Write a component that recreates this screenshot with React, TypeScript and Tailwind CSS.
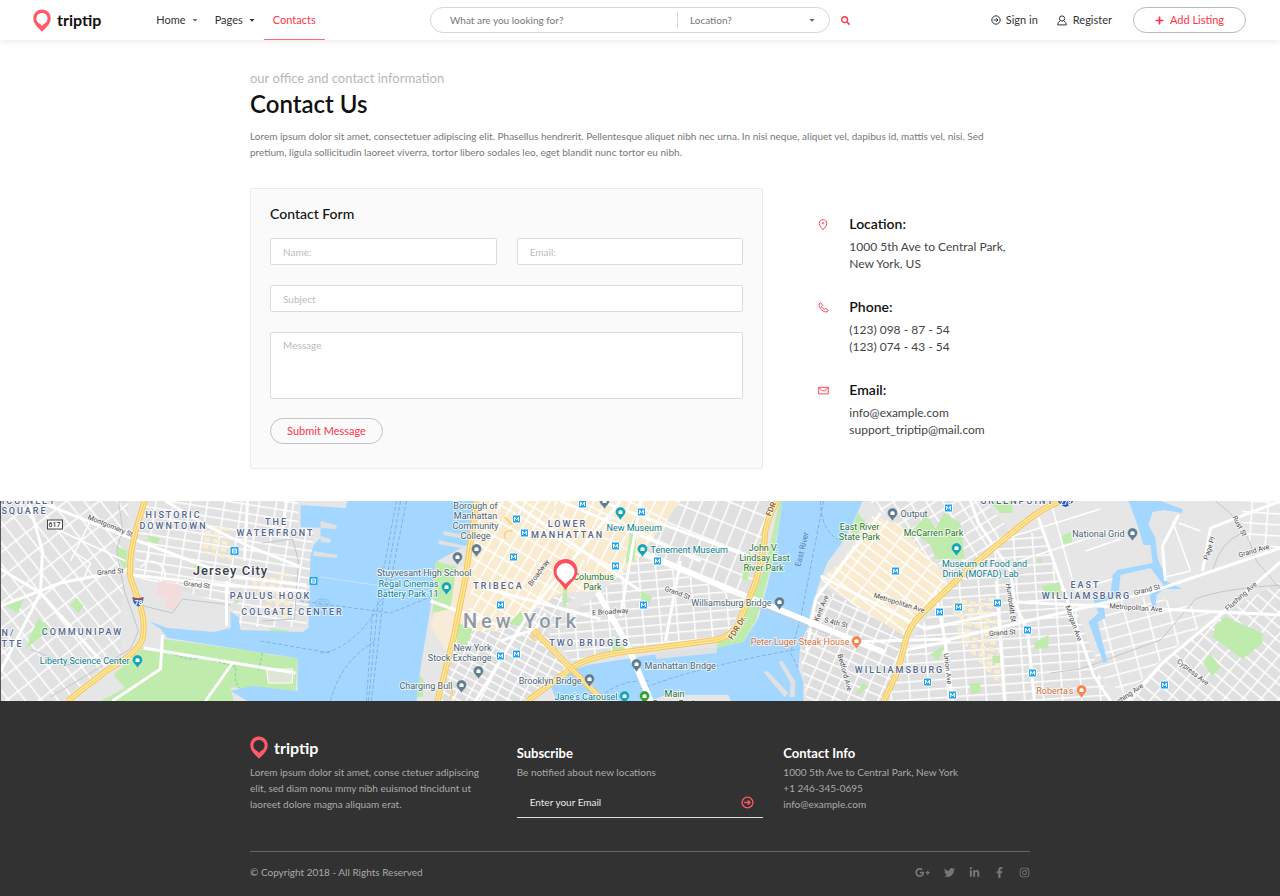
import React from 'react'

import { FaCaretDown, FaFacebookF, FaGooglePlusG, FaInstagram, FaLinkedinIn, FaPlus, FaSearch, FaTwitter } from "react-icons/fa";

function Logo({ textClass }: { textClass: string }) {
  return (
    <a href="#" className={`flex items-center gap-[6px] ${textClass}`}>
      <svg width="18" height="23" viewBox="0 0 18 23" aria-hidden="true">
        <path
          fill="#ff5a67"
          fillRule="evenodd"
          d="M9 0.5C4 0.5 0.3 4.2 0.3 9.2c0 3.3 1.7 6.2 4 8.7L9 22.8l4.700-4.900c2.300-2.500 4-5.400 4-8.700C17.700 4.200 14 0.500 9 0.500zM9 4c3.200 0 5.600 2.400 5.600 5.500 0 2.700-1.700 4.600-4 5.600L9 16.900l-1.600-1.800c-2.300-1-4-2.900-4-5.600C3.400 6.400 5.800 4 9 4z"
        />
      </svg>
      <span className="text-[16px] leading-5 font-bold">triptip</span>
    </a>
  );
}

function ArrowCircle({ size }: { size: number }) {
  return (
    <svg width={size} height={size} viewBox="0 0 12 12" fill="none" stroke="currentColor" strokeWidth="1.2" aria-hidden="true">
      <circle cx="6" cy="6" r="5" />
      <path d="M3 6h5M6.200 3.800L8.400 6 6.200 8.200" />
    </svg>
  );
}

function Header() {
  return (
    <header className="relative grid grid-cols-[1fr_420px_1fr] h-10 bg-white text-[11px] text-[#333] shadow-[0_2px_6px_rgba(0,0,0,0.08)]">
      <div className="flex items-center pl-[33px]">
        <Logo textClass="text-[#111]" />
        <nav className="flex h-10 ml-[47px]">
          <a href="#" className="flex items-center gap-[5px] px-2">
            Home <FaCaretDown size={8} className="text-[#777]" />
          </a>
          <a href="#" className="flex items-center gap-[5px] px-2">
            Pages <FaCaretDown size={8} />
          </a>
          <a href="#" className="flex items-center px-[9px] text-[#ff3347] border-y border-t-transparent border-b-[#ff6b76]">Contacts</a>
        </nav>
      </div>

      {/* Search */}
      <form className="flex items-center gap-[11px] text-[10px]">
        <div className="flex flex-1 items-center h-[26px] border border-[#d8d8d8] rounded-full px-[19px]">
          <input aria-label="Search" placeholder="What are you looking for?" className="flex-1 min-w-0 outline-none placeholder:text-[#777]" />
          <div className="relative flex items-center w-[133px] h-4 border-l border-[#d8d8d8]">
            <select aria-label="Location" className="appearance-none w-full pl-3 text-[#777] outline-none">
              <option>Location?</option>
            </select>
            <FaCaretDown size={8} className="absolute -right-[6px] text-[#666] pointer-events-none" />
          </div>
        </div>
        <button type="button" aria-label="Find" className="text-[#ff3347]">
          <FaSearch size={9} />
        </button>
      </form>

      <div className="flex items-center justify-end pr-[34px]">
        <a href="#" className="flex items-center gap-[5px]">
          <ArrowCircle size={10} /> Sign in
        </a>
        <a href="#" className="flex items-center gap-[6px] ml-[19px]">
          <svg width="10" height="11" viewBox="0 0 10 11" fill="none" stroke="currentColor" strokeWidth="1" aria-hidden="true">
            <circle cx="5" cy="3.500" r="2.600" />
            <path d="M3.200 5.800L1.200 7.600l-0.500 2.300h8.600l-0.500-2.300-2-1.800" />
          </svg>
          Register
        </a>
        <button type="button" className="flex items-center justify-center gap-[6px] w-[113px] h-[26px] ml-[21px] border border-[#bbb] rounded-full text-[#ff3347]">
          <FaPlus size={9} /> Add Listing
        </button>
      </div>
    </header>
  );
}

function ContactForm() {
  const field = "w-full border border-[#dcdcdc] rounded-[2px] bg-white px-3 text-[10px] outline-none placeholder:text-[#bbb]";
  return (
    <form className="col-span-2 border border-[#ebebeb] rounded-[2px] bg-[#fafafa] px-[19px] pt-[15px] pb-6 text-[11px]">
      <h2 className="text-[14px] leading-5 font-medium text-[#111]">Contact Form</h2>
      <div className="grid grid-cols-2 gap-5 mt-[14px]">
        <input aria-label="Name" placeholder="Name:" className={`${field} h-[27px]`} />
        <input aria-label="Email" type="email" placeholder="Email:" className={`${field} h-[27px]`} />
        <input aria-label="Subject" placeholder="Subject" className={`${field} h-[27px] col-span-2`} />
        <textarea aria-label="Message" placeholder="Message" className={`${field} block h-[67px] py-1 leading-4 resize-none col-span-2`} />
      </div>
      <button type="button" className="block w-[113px] h-[26px] mt-[19px] border border-[#c4c4c4] rounded-full text-[#ff3347]">Submit Message</button>
    </form>
  );
}

const contacts = [
  {
    title: "Location:",
    lines: ["1000 5th Ave to Central Park,", "New York, US"],
    icon: (
      <>
        <path d="M5 0.700C2.700 0.700 1.200 2.300 1.200 4.400c0 2.300 2.200 4.200 3.800 6.400 1.600-2.200 3.800-4.100 3.800-6.400C8.800 2.300 7.300 0.700 5 0.700z" />
        <circle cx="5" cy="4.300" r="0.700" />
      </>
    ),
  },
  {
    title: "Phone:",
    lines: ["(123) 098 - 87 - 54", "(123) 074 - 43 - 54"],
    icon: <path d="M1.300 1.600l1.300-0.900 2 2.600-1.100 1.200c0.600 1.200 1.500 2.200 2.800 2.900l1.300-1.100 2.700 2-0.900 1.500C5.500 11 0 5.500 1.300 1.600z" />,
  },
  {
    title: "Email:",
    lines: ["info@example.com", "support_triptip@mail.com"],
    icon: <path d="M0.700 2.300h9.600v6.600H0.700zM0.700 2.500l3.500 3.300h2.600l3.500-3.300" />,
  },
];

function ContactDetails() {
  return (
    <div className="flex flex-col gap-[25px] pl-[35px] pt-[26px]">
      {contacts.map((c) => (
        <div key={c.title} className="flex items-start gap-5">
          <svg width="11" height="11" viewBox="0 0 11 11" className="mt-[5px] shrink-0" fill="none" stroke="#ff4656" strokeWidth="1" aria-hidden="true">
            {c.icon}
          </svg>
          <div>
            <h3 className="text-[14px] leading-5 font-semibold text-[#111]">{c.title}</h3>
            <p className="mt-1 text-[12px] leading-[17px] text-[#444]">
              {c.lines[0]}<br />{c.lines[1]}
            </p>
          </div>
        </div>
      ))}
    </div>
  );
}

// [id, column step, row step, angle, block colour, outline]
const blocks: [string, number, number, number, string, string][] = [
  ["heights", 13, 20, -38, "#e2e2e2", "0,0 128,0 128,40 118,130 122,150 62,200 0,200"],
  ["downtown", 17, 9, 9, "#e2e2e2", "146,0 298,0 298,26 313,30 306,126 240,126 232,108 215,100 134,76 136,36"],
  ["battery", 12, 8, 28, "#dedede", "466,75 480,90 575,96 545,128 568,166 520,200 440,200"],
  ["tribeca", 10, 15, 31, "#f9ebd0", "476,0 560,0 600,90 560,92 500,130 458,130"],
  ["soho", 11, 22, 27, "#f9ebd0", "550,0 690,0 700,70 640,100 590,70"],
  ["eastside", 13, 21, 22, "#e0e0e0", "680,0 776,0 762,50 748,98 722,90 700,72 640,55"],
  ["bridges", 17, 9, -5, "#e0e0e0", "600,92 640,55 747,100 724,136 640,148 575,164 545,128"],
  ["northside", 20, 9, 37, "#f9ebd0", "840,62 872,15 905,25 935,62 948,82 922,112 900,140 820,78"],
  ["southside", 14, 10, 24, "#dedede", "820,84 906,136 895,172 882,200 806,200 800,150"],
  ["greenpoint", 14, 11, -32, "#e2e2e2", "868,0 985,0 1010,30 960,72 930,60 900,25"],
  ["eastwb", 19, 9, -4, "#e0e0e0", "1010,36 1040,30 1080,120 1110,200 886,200 910,140 950,84"],
  ["bushwick", 14, 11, 40, "#e0e0e0", "1225,112 1280,80 1280,200 1130,200 1163,161"],
  ["morgan", 22, 12, -15, "#e4e4e4", "1095,105 1150,95 1215,112 1160,160 1125,195 1095,170"],
  ["maspeth", 16, 11, 4, "#e6e6e6", "1240,0 1280,0 1280,50 1245,40"],
];

const majorRoads = [
  "M37 0L130 37L233 76L306 84", "M0 105L60 82L130 68", "M132 74L220 84L306 90", "M0 68L40 92L105 165", "M28 0L42 50L40 92L0 170",
  "M165 0L205 24L250 46L300 66", "M286 0L282 30", "M247 0L244 60", "M226 80L226 125", "M162 134L160 168L112 200", "M143 147L295 172", "M232 162L205 200",
  "M475 200L530 110L620 0", "M430 100L500 125", "M480 86L600 118", "M500 140L535 128L545 112", "M510 0L640 90", "M560 0L700 60",
  "M600 0L750 56", "M680 60L665 140", "M640 0L620 115", "M806 150L815 98L865 33L880 12",
  "M820 75L925 128L1000 112", "M808 142L950 138L1150 91L1280 47", "M900 150L950 140", "M1014 101L1280 114",
  "M1280 61L1223 111L1163 161L1127 200", "M1038 17L1093 174L1110 200", "M970 0L978 22L1010 70L1014 101", "M935 90L945 142L952 200",
  "M996 80L1004 200", "M1014 101L1027 130L1034 200", "M1280 0L1210 27L1202 70", "M1178 14L1162 45L1165 80",
];

const minorRoads = [
  "M1010 36L1100 8M1018 60L1110 30M1050 0L1075 90M1075 90L1112 78M1085 50L1120 38", "M1172 20L1190 70M1200 30L1178 22M1190 70L1165 76",
  "M60 30L125 60M72 50L90 62L82 80M90 20L70 60", "M150 60Q165 62 165 78M140 66Q150 60 148 50",
];

const highways = [
  "M144 0L135 31Q128 58 130 77L137 97Q146 120 142 138Q137 152 107 169L67 200",
  "M476 0L465 77L453 137L437 200",
  "M777 0Q764 20 764 40Q760 70 750 94L737 124Q730 136 715 139L640 149Q590 154 573 166L527 200",
  "M533 129L570 167L603 200",
  "M1063 0Q1048 2 1017 27L970 66L923 111Q908 125 905 140L897 171L883 200",
];

const parks = [
  "143,146 163,150 163,138 257,151 257,146 265,148 265,153 297,157 295,191 230,186 233,200 100,200 125,187 113,174",
  "116,45 127,50 125,70 119,60", "3,104 24,97 17,112", "38,117 50,128 25,148 30,135", "70,104 76,97 83,105 78,112", "148,34 160,38 157,43 147,40",
  "232,103 239,95 238,102", "270,127 290,130 268,137", "435,60 456,66 450,108 432,112", "458,122 472,128 466,144 456,142",
  "508,123 520,110 526,126", "563,80 567,88 566,105 562,104", "574,66 577,72 572,75", "630,30 638,8 634,60 625,62", "782,0 779,0 766,60 752,98 738,127 720,134 716,147 740,146 756,118 772,60",
  "741,78 748,50 752,54 747,80", "857,12 866,22 856,34 851,32", "911,30 926,14 935,27 944,12 960,22 964,58 935,58 930,44", "988,0 1012,0 1012,12 1000,12",
  "1041,85 1060,81 1060,94 1045,94", "1033,142 1048,134 1048,147 1035,148", "1215,125 1225,116 1262,132 1262,142 1242,158 1212,136", "1203,163 1209,152 1220,166 1212,175",
  "969,183 980,181 980,191 971,193", "992,155 1002,155 1002,162 992,162", "640,90 652,96 648,103 640,98", "855,195 862,182 868,186", "930,153 945,144 938,160",
  "1061,35 1070,31 1072,41 1063,43", "1036,58 1041,56 1042,61 1037,62", "192,64 200,62 204,67 196,68", "416,170 424,180 422,196 416,196", "611,140 618,134 624,150 612,151",
];

const water = [
  "300,4 345,7 347,0 476,0 470,42 435,61 430,107 420,167 416,200 247,200 230,190 250,185 297,190 297,157 257,151 167,137 160,128 148,120 167,127 213,131 230,127 230,111 238,116 240,129 302,131 308,127 310,55 313,44 320,37 320,27 300,26",
  "782,0 862,0 853,21 840,44 827,61 817,87 810,111 807,127 800,141 798,167 803,181 803,200 730,200 728,194 665,194 650,200 556,200 550,184 567,171 587,164 650,154 717,147 743,141 758,117 773,61",
  "1128,0 1160,0 1182,8 1182,12 1163,9 1152,11 1148,24 1155,37 1157,57 1167,81 1182,88 1163,88 1156,94 1155,106 1152,106 1149,94 1163,84 1150,67 1120,74 1118,94 1103,104 1105,117 1097,121 1107,161 1103,162 1088,121 1098,112 1093,99 1110,94 1112,74 1117,69 1152,62 1150,44 1143,44 1137,24",
];

const piers = [
  "320,20 336,24 336,28 320,27", "320,35 330,38 330,42 320,41", "313,50 337,54 337,57 313,55", "443,30 470,35 470,39 443,34",
  "438,39 465,45 465,48 438,43", "763,171 767,170 788,192 784,196", "778,161 782,160 795,181 794,196 789,196 790,182", "654,152 717,146 716,152 656,158",
];

const metro = [
  [582, 3], [641, 11], [516, 18], [524, 32], [615, 45], [513, 56], [657, 60], [615, 65], [500, 104], [643, 104], [516, 153], [500, 155],
  [948, 7], [895, 70], [997, 102], [958, 106], [939, 111], [1027, 129], [1032, 172], [927, 181], [1164, 184], [952, 194],
];

const places: [number, number, string][] = [
  [457, 56, "#5f7d8e"], [476, 48, "#5f7d8e"], [604, 0, "#5f7d8e"], [478, 170, "#5f7d8e"], [461, 184, "#5f7d8e"], [589, 178, "#5f7d8e"],
  [636, 163, "#5f7d8e"], [779, 101, "#5f7d8e"], [892, 12, "#5f7d8e"], [1132, 32, "#5f7d8e"], [137, 159, "#12a5b5"], [446, 86, "#12a5b5"],
  [620, 11, "#12a5b5"], [642, 48, "#12a5b5"], [624, 195, "#12a5b5"], [956, 47, "#12a5b5"], [856, 140, "#f5854d"], [1081, 189, "#f5854d"], [644, 195, "#2ea02e"],
];

const districts: [number, number, string][] = [
  [26, 3, "MCGINLEY"], [24, 13, "SQUARE"], [173, 17, "HISTORIC"], [173, 28, "DOWNTOWN"], [276, 24, "THE"], [275, 35, "WATERFRONT"], [270, 98, "PAULUS HOOK"],
  [292, 114, "COLGATE CENTER"], [82, 134, "COMMUNIPAW"], [8, 135, "N/"], [12, 146, "TTE"], [567, 26, "LOWER"], [567, 37, "MANHATTAN"],
  [498, 88, "TRIBECA"], [589, 145, "TWO BRIDGES"], [899, 172, "WILLIAMSBURG"], [1085, 87, "EAST"], [1086, 98, "WILLIAMSBURG"], [1017, 3, "GREENPOINT"],
];

const slate = "#4c6675";
const teal = "#0a7f8e";
const green = "#2a752d";
const orange = "#d96f38";

const labels: [number, number, string, string, "start" | "middle" | "end"][] = [
  [475, 8, "Borough of", slate, "middle"], [475, 18, "Manhattan", slate, "middle"], [475, 28, "Community", slate, "middle"], [475, 38, "College", slate, "middle"],
  [471, 75, "Stuyvesant High School", slate, "end"], [438, 86, "Regal Cinemas", teal, "end"], [438, 96, "Battery Park 11", teal, "end"],
  [491, 150, "New York", slate, "end"], [491, 160, "Stock Exchange", slate, "end"], [452, 188, "Charging Bull", slate, "end"], [581, 183, "Brooklyn Bridge", slate, "end"],
  [617, 199, "Jane's Carousel", teal, "end"], [644, 168, "Manhattan Bridge", slate, "start"], [674, 196, "Main", green, "middle"], [674, 206, "Street Park", green, "middle"],
  [606, 30, "New Museum", teal, "start"], [650, 52, "Tenement Museum", teal, "start"], [593, 79, "Columbus", green, "middle"], [592, 89, "Park", green, "middle"],
  [763, 50, "John V.", green, "middle"], [764, 60, "Lindsay East", green, "middle"], [763, 70, "River Park", green, "middle"], [771, 105, "Williamsburg Bridge", slate, "end"],
  [859, 29, "East River", green, "middle"], [859, 39, "State Park", green, "middle"], [900, 16, "Output", slate, "start"], [933, 35, "McCarren Park", green, "middle"],
  [984, 66, "Museum of Food and", teal, "middle"], [980, 76, "Drink (MOFAD) Lab", teal, "middle"], [1124, 36, "National Grid", slate, "end"],
  [849, 144, "Peter Luger Steak House", orange, "end"], [1073, 193, "Roberta's", orange, "end"], [129, 163, "Liberty Science Center", teal, "end"],
];

const streets: [number, number, number, string][] = [
  [109, 27, 22, "Montgomery St"], [110, 73, -4, "Grand St"], [196, 86, 6, "Grand St"], [540, 73, -54, "Broadway"],
  [610, 113, -4, "E Broadway"], [676, 94, 20, "Grand St"], [823, 108, -68, "Kent Ave"], [835, 124, 14, "S 4th St"],
  [898, 104, 17, "Metropolitan Ave"], [842, 172, 75, "Bedford Ave"], [945, 168, 84, "Union Ave"], [1008, 102, 82, "Humboldt St"],
  [1071, 123, 70, "Morgan Ave"], [1002, 134, -4, "Grand St"], [1147, 91, -14, "Grand St"], [1135, 109, 4, "Metropolitan Ave"],
  [1254, 52, -16, "Grand Ave"], [1211, 48, -72, "Page Pl"], [1237, 26, 62, "Rust St"], [1242, 97, -42, "Flushing Ave"],
  [1191, 173, 38, "Cypress Ave"], [1127, 197, -34, "Flushing Ave"],
];

function CityMap() {
  return (
    <svg viewBox="0 0 1280 200" preserveAspectRatio="xMidYMid slice" className="block w-full h-[200px] bg-[#e6e6e6] border-l border-[#555]" role="img" aria-label="Map of New York" fontFamily="Roboto, sans-serif">
      <defs>
        {blocks.map(([id, w, h, angle, fill]) => (
          <pattern key={id} id={id} width={w} height={h} patternUnits="userSpaceOnUse" patternTransform={`rotate(${angle})`}>
            <rect width={w} height={h} fill={fill} />
            <path d={`M0 0H${w}M0 0V${h}`} stroke="#fff" strokeWidth="3" />
          </pattern>
        ))}
        <pattern id="shops" width="9" height="7" patternUnits="userSpaceOnUse" patternTransform="rotate(10)">
          <rect width="6" height="4" fill="#fdeecb" />
        </pattern>
      </defs>

      {/* Land */}
      <rect width="1280" height="200" fill="#e6e6e6" />
      {blocks.map(([id, , , , , points]) => (
        <polygon key={id} points={points} fill={`url(#${id})`} />
      ))}
      <path d="M205 24L228 27L232 60L198 50ZM250 76L290 72L292 96L255 90ZM262 95L290 95L288 118L266 112ZM950 100L1000 96L1004 190L960 140Z" fill="url(#shops)" />
      <path d="M158 80L182 84L176 110L164 106L166 96L156 95Z" fill="#f5dcdc" />
      <path d="M460 65L474 70L464 130L445 150L430 125L440 90Z" fill="#f8ecd8" />
      {parks.map((points) => (
        <polygon key={points} points={points} fill="#bfebad" />
      ))}

      {/* Rail and paths */}
      <g fill="none" stroke="#c3c7cc" strokeWidth="1">
        <path d="M118 0L122 28L116 50L124 90L138 130L130 148L50 196" />
        <path d="M30 148L66 164L85 162M139 104L172 112L182 98L230 104M262 42L292 38L298 60L294 118L262 120" />
        <path d="M1050 172L1080 168L1160 139L1195 98Q1220 88 1280 84M1215 0Q1245 20 1256 60L1280 88M1242 32Q1220 40 1212 70" />
      </g>
      <path d="M165 150Q190 162 200 156L236 166Q232 180 240 188M262 152L258 170" fill="none" stroke="#8fc79a" strokeWidth="1" strokeDasharray="3 2" />

      {/* Water */}
      {water.map((points) => (
        <polygon key={points} points={points} fill="#a4d7ff" />
      ))}
      {piers.map((points) => (
        <polygon key={points} points={points} fill="#dfe1e3" />
      ))}
      <g fill="none" stroke="#7fb1e8" strokeWidth="1" strokeDasharray="4 2">
        <path d="M396 0L378 96L368 200M406 0L388 90L372 110L366 200M400 0L383 96L371 200" />
        <path d="M260 140L330 152M300 100L390 112L440 92M320 152Q350 150 380 104M330 200Q340 160 375 140" />
        <path d="M823 0L800 118L790 152L798 168M820 0Q820 30 840 40M640 188Q700 165 798 148M600 196Q620 178 650 180" />
      </g>
      <path d="M320 76L430 92" stroke="#c9e3fb" strokeWidth="1" />
      <g fill="none" stroke="#8abcf0" strokeWidth="1">
        <ellipse cx="322" cy="102" rx="7" ry="4" />
        <ellipse cx="322" cy="102" rx="4" ry="2" />
      </g>
      <path d="M266 168H292V182H268Z" fill="#dfe5d8" stroke="#fff" />

      {/* Roads */}
      {minorRoads.map((d) => (
        <path key={d} d={d} fill="none" stroke="#fff" strokeWidth="1.500" />
      ))}
      {majorRoads.map((d) => (
        <path key={d} d={d} fill="none" stroke="#fff" strokeWidth="3" />
      ))}
      <path d="M597 91L627 144L650 200M640 51L750 97L885 152" fill="none" stroke="#fff" strokeWidth="6" />
      <path d="M745 102L830 134" stroke="#c8cdd2" strokeWidth="1" />
      {highways.map((d) => (
        <g key={d} fill="none">
          <path d={d} stroke="#f3c75c" strokeWidth="6" />
          <path d={d} stroke="#ffe596" strokeWidth="4" />
          <path d={d} stroke="#f6cf6c" strokeWidth="1" />
        </g>
      ))}
      <path d="M535 140L530 136L540 132M448 180Q454 186 450 198M504 16L512 24M504 38Q504 28 512 30" fill="none" stroke="#f8d77c" strokeWidth="2" />

      {/* Stations and places */}
      {metro.map(([x, y]) => (
        <g key={`${x}-${y}`} fill="none">
          <rect x={x - 4} y={y - 4} width="8" height="8" rx="1" fill="#1fa5f2" stroke="#fff" strokeWidth="1" />
          <path d={`M${x - 2} ${y + 2}v-4l2 3 2-3v4`} stroke="#fff" strokeWidth="1" />
        </g>
      ))}
      {[[234, 50], [313, 80]].map(([x, y]) => (
        <g key={x}>
          <rect x={x - 4} y={y - 4} width="8" height="8" rx="1" fill="#1fa5f2" />
          <path d={`M${x - 2} ${y - 2}h4v4h-4zM${x - 2} ${y}h4`} fill="none" stroke="#fff" strokeWidth="1" />
        </g>
      ))}
      {places.map(([x, y, color]) => (
        <g key={`${x}-${y}`}>
          <path d={`M${x - 5} ${y}a5 5 0 1 1 10 0c0 3-3 4-5 8c-2-4-5-5-5-8z`} fill={color} stroke="#fff" strokeOpacity="0.500" strokeWidth="0.500" />
          <path d={`M${x - 2} ${y + 2}v-3l2-1 2 1v3z`} fill="#fff" />
        </g>
      ))}

      {/* Road shields */}
      <rect x="47" y="19" width="15" height="9" fill="#fff" stroke="#444" strokeWidth="1" />
      <text x="54" y="26" fontSize="7" fontWeight="500" textAnchor="middle" fill="#333">617</text>
      <path d="M132 96q5 2 11 0q1 7-5 10q-7-3-6-10z" fill="#3567b5" stroke="#fff" strokeWidth="0.500" />
      <path d="M132 96q5 2 11 0v2h-11z" fill="#d3453f" />
      <text x="138" y="104" fontSize="7" fontWeight="700" textAnchor="middle" fill="#fff">78</text>
      <path d="M1057 -4h16q1 7-8 10q-9-3-8-10z" fill="#2456b8" />
      <text x="1065" y="4" fontSize="7" fontWeight="700" textAnchor="middle" fill="#fff">278</text>

      {/* Names */}
      <g stroke="#fff" strokeOpacity="0.700" strokeWidth="2" strokeLinejoin="round" paintOrder="stroke">
        {districts.map(([x, y, name]) => (
          <text key={`${name}-${y}`} x={x} y={y} fontSize="9" fontWeight="500" textAnchor="middle" fill="#536791" className="tracking-[2px]">{name}</text>
        ))}
        {streets.map(([x, y, angle, name]) => (
          <text key={`${name}-${x}`} transform={`translate(${x} ${y}) rotate(${angle})`} fontSize="7" textAnchor="middle" fill="#4a4a4a">{name}</text>
        ))}
        {labels.map(([x, y, name, color, anchor]) => (
          <text key={`${name}-${x}`} x={x} y={y} fontSize="9" textAnchor={anchor} fill={color}>{name}</text>
        ))}
        <text x="230" y="74" fontSize="13" fontWeight="500" textAnchor="middle" fill="#39424e" className="tracking-[1px]">Jersey City</text>
        <text x="521" y="127" fontSize="20" fontWeight="500" textAnchor="middle" fill="#8e99a8" className="tracking-[4px]">New York</text>
        <text transform="translate(773 9) rotate(-66)" fontSize="8" fontWeight="500" textAnchor="middle" fill="#8a5a20">FDR</text>
        <text transform="translate(739 128) rotate(-58)" fontSize="8" fontWeight="500" textAnchor="middle" fill="#8a5a20">FDR Dr.</text>
      </g>
      <text transform="translate(804 49) rotate(-76)" fontSize="8" textAnchor="middle" fill="#5583b8">East River</text>

      {/* Office marker */}
      <path d="M565 58c-7 0-12 5-12 12 0 8 7 11 12 19 5-8 12-11 12-19 0-7-5-12-12-12z" fill="#ff4d5d" />
      <circle cx="565" cy="71" r="9" fill="#fff" />
      <path d="M559 77L565 83L571 77Z" fill="#fff" />
    </svg>
  );
}

function Footer() {
  return (
    <footer className="flex-1 bg-[#323232] pt-[35px] pb-4 text-[10px] leading-4 text-[#aaa]">
      <div className="max-w-[780px] mx-auto">
        <div className="grid grid-cols-3 gap-5">
          <div>
            <div className="h-7">
              <Logo textClass="text-white" />
            </div>
            <p>Lorem ipsum dolor sit amet, conse ctetuer adipiscing elit, sed diam nonu mmy nibh euismod tincidunt ut laoreet dolore magna aliquam erat.</p>
          </div>

          {/* Subscribe */}
          <div>
            <h2 className="flex items-end h-7 text-[13px] leading-[22px] font-bold text-white">Subscribe</h2>
            <p>Be notified about new locations</p>
            <form className="flex items-center h-[31px] mt-[7px] px-[9px] border-b border-[#ddd]">
              <input aria-label="Email address" type="email" placeholder="Enter your Email" className="flex-1 min-w-0 pl-1 outline-none placeholder:text-[#e8e8e8]" />
              <button type="button" aria-label="Subscribe" className="text-[#ff5a67]">
                <ArrowCircle size={13} />
              </button>
            </form>
          </div>

          {/* Contact Info */}
          <div>
            <h2 className="flex items-end h-7 text-[13px] leading-[22px] font-bold text-white">Contact Info</h2>
            <p>1000 5th Ave to Central Park, New York</p>
            <p>+1 246-345-0695</p>
            <p>info@example.com</p>
          </div>
        </div>

        <div className="flex items-center justify-between mt-[33px] pt-3 border-t border-[#666]">
          <p>© Copyright 2018 - All Rights Reserved</p>
          <div className="flex items-center gap-[14px] text-[#777]">
            <a href="#" aria-label="Google Plus"><FaGooglePlusG size={15} /></a>
            <a href="#" aria-label="Twitter"><FaTwitter size={11} /></a>
            <a href="#" aria-label="LinkedIn"><FaLinkedinIn size={11} /></a>
            <a href="#" aria-label="Facebook"><FaFacebookF size={11} /></a>
            <a href="#" aria-label="Instagram"><FaInstagram size={11} /></a>
          </div>
        </div>
      </div>
    </footer>
  );
}

export default function App() {
  return (
    <div className="flex flex-col min-h-screen bg-white font-['Lato','Open_Sans',sans-serif]">
      <Header />
      <main>
        <div className="max-w-[780px] mx-auto pt-7 pb-8">
          <p className="text-[13px] leading-5 text-[#b8b8b8]">our office and contact information</p>
          <h1 className="text-[24px] leading-8 font-semibold text-[#111]">Contact Us</h1>
          <p className="max-w-[756px] mt-2 text-[10px] leading-4 text-[#777]">
            Lorem ipsum dolor sit amet, consectetuer adipiscing elit. Phasellus hendrerit. Pellentesque aliquet nibh nec urna. In nisi neque, aliquet vel, dapibus id, mattis vel, nisi. Sed pretium, ligula sollicitudin laoreet viverra, tortor libero sodales leo, eget blandit nunc tortor eu nibh.
          </p>
          <div className="grid grid-cols-3 gap-5 mt-7">
            <ContactForm />
            <ContactDetails />
          </div>
        </div>
        <CityMap />
      </main>
      <Footer />
    </div>
  );
}
